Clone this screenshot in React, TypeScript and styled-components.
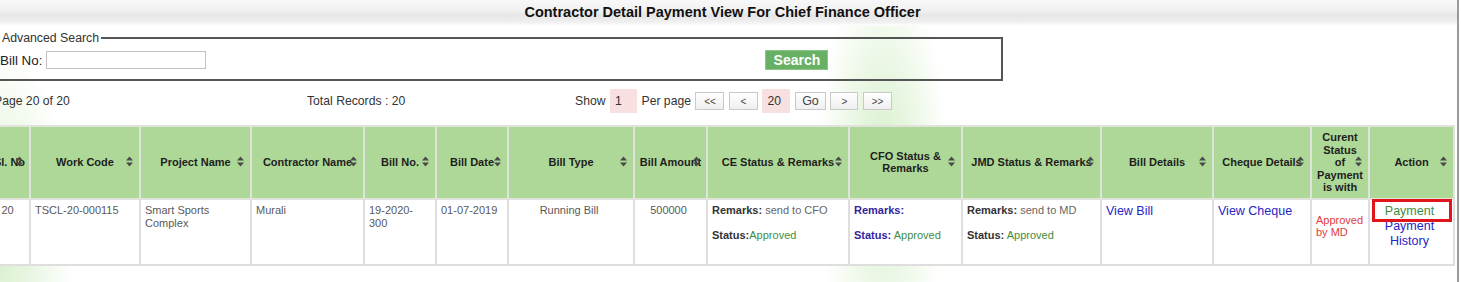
import React from "react";
import { createGlobalStyle, styled } from "styled-components";

const GlobalStyle = createGlobalStyle`
  html, body {
    margin: 0;
    padding: 0;
    background: #fff;
    overflow: hidden;
  }
  body {
    font-family: "Liberation Sans", Arial, sans-serif;
    color: #333;
  }
`;

type Column = { title: React.ReactNode; width: number };

const columns: Column[] = [
  { title: "Sl. No", width: 41 },
  { title: "Work Code", width: 110 },
  { title: "Project Name", width: 111 },
  { title: "Contractor Name", width: 113 },
  { title: "Bill No.", width: 72 },
  { title: "Bill Date", width: 72 },
  { title: "Bill Type", width: 126 },
  { title: "Bill Amount", width: 73 },
  { title: "CE Status & Remarks", width: 142 },
  { title: "CFO Status & Remarks", width: 113 },
  { title: "JMD Status & Remarks", width: 139 },
  { title: "Bill Details", width: 112 },
  { title: "Cheque Details", width: 98 },
  {
    title: (
      <>
        Curent
        <br />
        Status
        <br />
        of
        <br />
        Payment
        <br />
        is with
      </>
    ),
    width: 58,
  },
  { title: "Action", width: 85 },
];

function SortIcon() {
  return (
    <SortMark>
      <svg width="7" height="11" viewBox="0 0 7 11">
        <path d="M0 4.6 L3.5 0.4 L7 4.6 Z M0 6.4 L7 6.4 L3.5 10.6 Z" fill="#4a4a4a" />
      </svg>
    </SortMark>
  );
}

export default function App() {
  return (
    <>
      <GlobalStyle />
      <Page>
        <TitleBar>Contractor Detail Payment View For Chief Finance Officer</TitleBar>

        <SearchBox>
          <Legend>Advanced Search</Legend>
          <SearchRow>
            <FieldLabel>Bill No:</FieldLabel>
            <TextInput type="text" />
            <SearchButton>Search</SearchButton>
          </SearchRow>
        </SearchBox>

        <ControlsRow>
          <span>Page 20 of 20</span>
          <span>Total Records : 20</span>
          <Pager>
            <span>Show</span>
            <PageInput defaultValue="1" $w={27} />
            <span>Per page</span>
            <PagerButton $w={29}>&lt;&lt;</PagerButton>
            <PagerButton $w={29}>&lt;</PagerButton>
            <PageInput defaultValue="20" $w={28} />
            <PagerButton $w={31} $big>
              Go
            </PagerButton>
            <PagerButton $w={28}>&gt;</PagerButton>
            <PagerButton $w={29}>&gt;&gt;</PagerButton>
          </Pager>
        </ControlsRow>

        <Grid>
          <colgroup>
            {columns.map((c, i) => (
              <col key={i} style={{ width: c.width }} />
            ))}
          </colgroup>
          <thead>
            <tr>
              {columns.map((c, i) => (
                <Th key={i}>
                  {c.title}
                  <SortIcon />
                </Th>
              ))}
            </tr>
          </thead>
          <tbody>
            <BodyRow>
              <Td $align="center">20</Td>
              <Td>TSCL-20-000115</Td>
              <Td>Smart Sports Complex</Td>
              <Td>Murali</Td>
              <Td>19-2020-300</Td>
              <Td>01-07-2019</Td>
              <Td $align="center">Running Bill</Td>
              <Td $align="center">500000</Td>
              <Td>
                <Line>
                  <Key>Remarks:</Key> send to CFO
                </Line>
                <Line $gap>
                  <Key>Status:</Key>
                  <Ok>Approved</Ok>
                </Line>
              </Td>
              <Td>
                <Line>
                  <Key $tone="#34249c">Remarks:</Key>
                </Line>
                <Line $gap>
                  <Key $tone="#34249c">Status:</Key> <Ok>Approved</Ok>
                </Line>
              </Td>
              <Td>
                <Line>
                  <Key>Remarks:</Key> send to MD
                </Line>
                <Line $gap>
                  <Key>Status:</Key> <Ok>Approved</Ok>
                </Line>
              </Td>
              <Td>
                <LinkText href="#">View Bill</LinkText>
              </Td>
              <Td>
                <LinkText href="#">View Cheque</LinkText>
              </Td>
              <Td $tight>
                <StatusNote>Approved by MD</StatusNote>
              </Td>
              <Td $align="center">
                <ActionBox>
                  <LinkText href="#" $tone="#3f8d3c">
                    Payment
                  </LinkText>
                  <Highlight />
                  <LinkText href="#">Payment History</LinkText>
                </ActionBox>
              </Td>
            </BodyRow>
          </tbody>
        </Grid>
      </Page>
    </>
  );
}

const Page = styled.div`
  width: 1469px;
  height: 282px;
  margin-left: -12px;
  border-right: 2px solid #9a9a9a;
  overflow: hidden;
  background:
    radial-gradient(ellipse 65px 210px at 895px 170px, rgba(196, 232, 178, 0.7), rgba(255, 255, 255, 0) 100%),
    radial-gradient(ellipse 80px 190px at 8px 240px, rgba(196, 232, 178, 0.7), rgba(255, 255, 255, 0) 100%),
    #fff;
`;

const TitleBar = styled.div`
  height: 26px;
  line-height: 24px;
  text-align: center;
  font-size: 14.5px;
  font-weight: bold;
  color: #111;
  background: linear-gradient(
    to bottom,
    #f8f8f8 0%,
    #f1f1f1 40%,
    #e6e6e6 60%,
    #f0f0f0 85%,
    #ffffff 100%
  );
`;

const SearchBox = styled.fieldset`
  box-sizing: border-box;
  width: 1015px;
  margin: 5px 0 0 0;
  padding: 5px 0 9px 10px;
  border: 2px solid #555;
  min-inline-size: 0;
`;

const Legend = styled.legend`
  font-size: 12.3px;
  padding: 0 2px;
  color: #333;
`;

const SearchRow = styled.div`
  display: flex;
  align-items: center;
  height: 20px;
`;

const FieldLabel = styled.label`
  font-size: 13.4px;
  color: #222;
`;

const TextInput = styled.input`
  box-sizing: border-box;
  width: 160px;
  height: 18px;
  margin: 0 0 0 4px;
  border: 1px solid #c2c2c2;
  padding: 0 2px;
`;

const SearchButton = styled.button`
  box-sizing: border-box;
  width: 63px;
  height: 20px;
  margin-left: 559px;
  padding: 0;
  border: 1px solid #8cc687;
  background: #68b064;
  color: #fff;
  font-family: "Liberation Sans", Arial, sans-serif;
  font-size: 14px;
  font-weight: bold;
`;

const ControlsRow = styled.div`
  display: grid;
  grid-template-columns: 313px 268px auto;
  align-items: center;
  height: 24px;
  margin-top: 8px;
  padding-left: 6px;
  font-size: 12.2px;
  color: #333;
`;

const Pager = styled.div`
  display: flex;
  align-items: center;
  gap: 4.5px;
`;

const PageInput = styled.input<{ $w: number }>`
  box-sizing: border-box;
  width: ${(p) => p.$w}px;
  height: 24px;
  margin: 0;
  padding: 0 5px;
  border: none;
  background: #f9e0e0;
  font-family: "Liberation Sans", Arial, sans-serif;
  font-size: 12.2px;
  color: #333;
`;

const PagerButton = styled.button<{ $w: number; $big?: boolean }>`
  box-sizing: border-box;
  width: ${(p) => p.$w}px;
  height: 18px;
  padding: 0;
  border: 1px solid #c9c9c9;
  background: linear-gradient(#ffffff, #efefef);
  font-family: "Liberation Sans", Arial, sans-serif;
  font-size: ${(p) => (p.$big ? "12.5px" : "10px")};
  color: #444;
`;

const Grid = styled.table`
  width: 1465px;
  margin-top: 12px;
  border-collapse: collapse;
  table-layout: fixed;
  background: #fff;
`;

const Th = styled.th`
  position: relative;
  padding: 4px 2px;
  border: 2px solid #dfe3dc;
  background: #aed897;
  font-size: 11px;
  line-height: 12.5px;
  font-weight: bold;
  color: #1e1e1e;
  text-align: center;
  vertical-align: middle;
`;

const SortMark = styled.span`
  position: absolute;
  right: 6px;
  top: 50%;
  height: 11px;
  margin-top: -6px;
  line-height: 0;
`;

const BodyRow = styled.tr`
  height: 66px;
`;

const Td = styled.td<{ $align?: string; $tight?: boolean }>`
  padding: ${(p) => (p.$tight ? "4px 2px 4px 4px" : "4px 8px 4px 4px")};
  border: 2px solid #dedede;
  font-size: 11px;
  line-height: 13px;
  color: #595959;
  text-align: ${(p) => p.$align || "left"};
  vertical-align: top;
`;

const Line = styled.div<{ $gap?: boolean }>`
  margin-top: ${(p) => (p.$gap ? "12px" : "0")};
  color: #666;
`;

const Key = styled.b<{ $tone?: string }>`
  color: ${(p) => p.$tone || "#333"};
`;

const Ok = styled.span`
  color: #3f8d3c;
`;

const LinkText = styled.a<{ $tone?: string }>`
  display: block;
  font-size: 12.5px;
  line-height: 15px;
  color: ${(p) => p.$tone || "#2525c6"};
  text-decoration: none;
`;

const StatusNote = styled.div`
  margin-top: 10px;
  color: #e13b3b;
  line-height: 12.7px;
`;

const ActionBox = styled.div`
  position: relative;
`;

const Highlight = styled.span`
  position: absolute;
  left: -2px;
  right: -7px;
  top: -5px;
  height: 17px;
  border: 3px solid #e0161c;
`;
